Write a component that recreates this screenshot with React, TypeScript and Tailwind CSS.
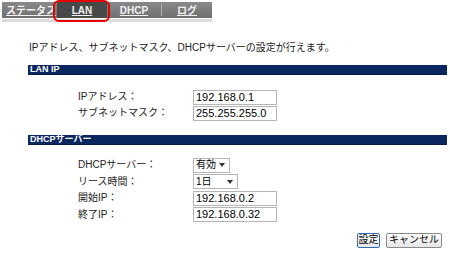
import React from "react";

const font = { fontFamily: '"Liberation Sans", "Noto Sans CJK JP", sans-serif' };

function Field({ value, w = "w-[84px]" }: { value: string; w?: string }) {
  return (
    <div className={`${w} shrink-0 h-[15px] border border-[#b5b5b5] bg-white flex items-center pl-[2px] text-[11px] leading-none text-black`}>
      {value}
    </div>
  );
}

function Sel({ value, w }: { value: string; w: string }) {
  return (
    <div className={`${w} shrink-0 h-[15px] border border-[#b5b5b5] bg-white flex items-center justify-between pl-[2px] pr-[4px] text-[10px] leading-none text-black`}>
      <span>{value}</span>
      <svg width="6" height="4" viewBox="0 0 6 4"><path d="M0 0H6L3 4Z" fill="#333" /></svg>
    </div>
  );
}

function Row({ label, children }: { label: string; children: React.ReactNode }) {
  return (
    <div className="flex items-center h-[16px]">
      <div className="w-[165px] shrink-0 pl-[50px] text-[10px] leading-none text-[#222] whitespace-nowrap">{label}</div>
      {children}
    </div>
  );
}

function Header({ title }: { title: string }) {
  return (
    <div className="ml-[28px] w-[419px] h-[10px] bg-[#0b2760] border-b border-[#061a45] flex items-center pl-[2px] text-white font-bold text-[9px] leading-none">
      {title}
    </div>
  );
}

export default function App() {
  return (
    <div className="w-[450px] h-[254px] bg-white relative overflow-hidden" style={font}>
      {/* Tab bar */}
      <div className="relative pt-[2px] pl-[2px]">
        <div className="w-[210px] h-[16px] bg-gradient-to-b from-[#8a8a8a] to-[#6f6f6f] flex items-center text-[10px] font-bold text-[#f2f2f2]">
          <div className="w-[55px] pl-[4px] underline whitespace-nowrap">ステータス</div>
          <div className="w-[50px] h-full bg-[#484848] flex items-center justify-center underline">LAN</div>
          <div className="w-[54px] flex justify-center underline">DHCP</div>
          <div className="w-px h-[12px] bg-[#b0b0b0]" />
          <div className="flex-1 flex justify-center underline">ログ</div>
        </div>
        <div className="w-[210px] h-[3px] bg-[#dcdcdc] mt-[1px]" />
        <div className="absolute left-[53px] top-0 w-[57px] h-[22px] border-2 border-[#e60000] rounded-[6px]" />
      </div>

      {/* Description */}
      <div className="mt-[21px] ml-[29px] text-[10px] leading-none text-[#222]">
        IPアドレス、サブネットマスク、DHCPサーバーの設定が行えます。
      </div>

      <div className="mt-[12px]">
        <Header title="LAN IP" />
      </div>
      <div className="mt-[14px] ml-[28px] flex flex-col">
        <Row label="IPアドレス："><Field value="192.168.0.1" /></Row>
        <Row label="サブネットマスク："><Field value="255.255.255.0" /></Row>
      </div>

      <div className="mt-[14px]">
        <Header title="DHCPサーバー" />
      </div>
      <div className="mt-[12px] ml-[28px] flex flex-col gap-[0.5px]">
        <Row label="DHCPサーバー："><Sel value="有効" w="w-[37px]" /></Row>
        <Row label="リース時間："><Sel value="1日" w="w-[45px]" /></Row>
        <Row label="開始IP："><Field value="192.168.0.2" /></Row>
        <Row label="終了IP："><Field value="192.168.0.32" /></Row>
      </div>

      <div className="mt-[10px] flex justify-end pr-[8px] gap-[6px]">
        <button className="h-[15px] w-[23px] border border-[#2d6fb6] rounded-[2px] bg-gradient-to-b from-white to-[#e6e6e6] text-[10px] leading-none text-black" style={font}>
          設定
        </button>
        <button className="h-[15px] w-[56px] border border-[#8a8a8a] rounded-[2px] bg-gradient-to-b from-white to-[#e6e6e6] text-[10px] leading-none text-black" style={font}>
          キャンセル
        </button>
      </div>
    </div>
  );
}
